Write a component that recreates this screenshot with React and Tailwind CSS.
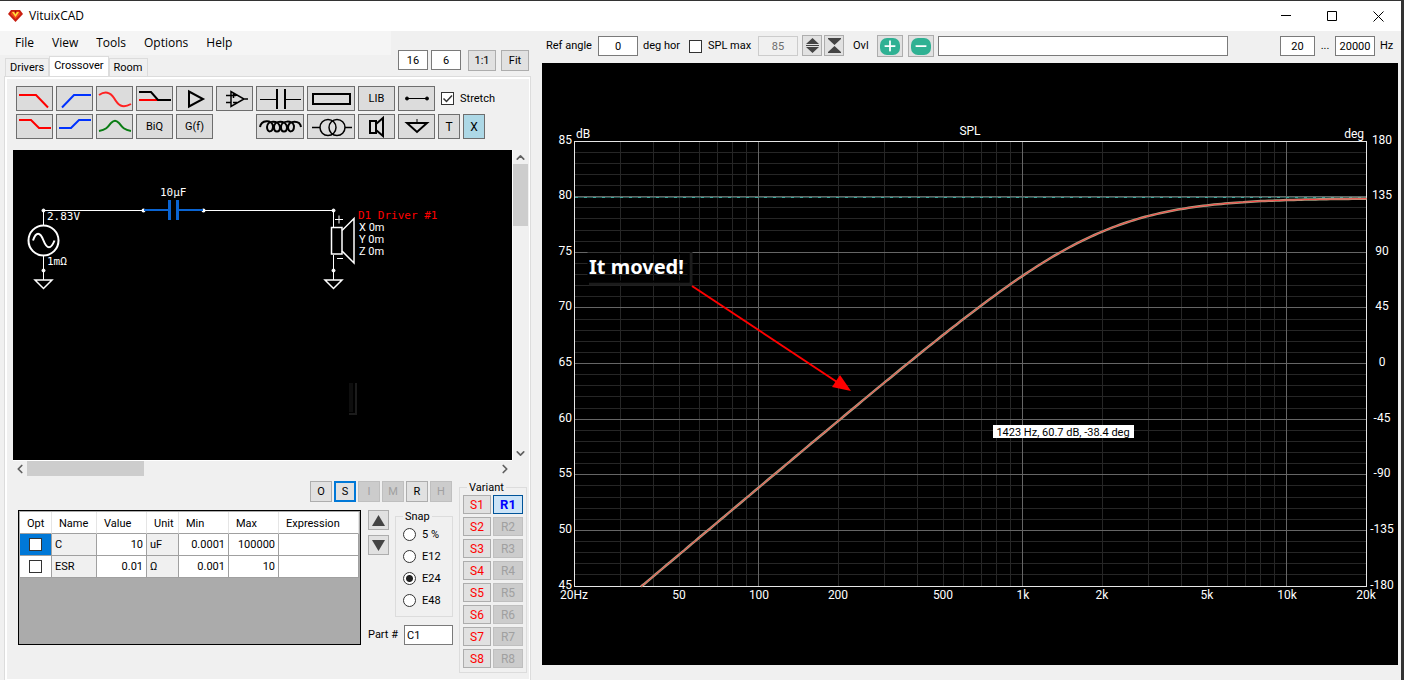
import { useState } from "react";
import { FaPlus, FaMinus } from "react-icons/fa6";
import { FiChevronDown, FiChevronLeft, FiChevronRight, FiChevronUp } from "react-icons/fi";

const menuItems = ["File", "View", "Tools", "Options", "Help"];
const tabs = ["Drivers", "Crossover", "Room"];
const variants = [1, 2, 3, 4, 5, 6, 7, 8];
const snaps = ["5 %", "E12", "E24", "E48"];

const params = [
  { name: "C", value: "10", unit: "uF", min: "0.0001", max: "100000" },
  { name: "ESR", value: "0.01", unit: "Ω", min: "0.001", max: "10" },
];

const modes = [
  { label: "O" },
  { label: "S", active: true },
  { label: "I", disabled: true },
  { label: "M", disabled: true },
  { label: "R" },
  { label: "H", disabled: true },
];

const inputClass = "h-5 border border-[#7a7a7a] bg-white text-center outline-none";
const buttonClass = "flex items-center justify-center border border-[#adadad] bg-[#e1e1e1]";
const checkClass = "block h-[13px] w-[13px] shrink-0 appearance-none border border-[#333] bg-white";

const ToolButton = ({ label, className = "w-[37px] bg-[#dcdcdc]", children }) => (
  <button
    aria-label={label}
    className={`flex h-[25px] shrink-0 items-center justify-center border border-[#6e6e6e] ${className}`}
  >
    {children}
  </button>
);

const Glyph = ({ width = 35, color = "#000", stroke = 2, children }) => (
  <svg width={width} height="23" viewBox={`0 0 ${width} 23`} fill="none" stroke={color} strokeWidth={stroke}>
    {children}
  </svg>
);

const TitleBar = () => (
  <header className="flex h-[30px] items-center justify-between bg-white">
    <div className="flex items-center gap-1.5 pl-2">
      <svg width="15" height="12" viewBox="0 0 15 12">
        <path d="M3 0h9l3 4-7.500 8L0 4z" fill="#c81e10" />
        <path d="M4 1.500h7l1.500 2.500L7.500 9 2.500 4z" fill="#f0481c" />
        <path d="M4 2l3.500 5L11 2 9 2 7.500 4.500 6 2z" fill="#ffe23c" />
        <path d="M6.500 1h2l-1 2.500z" fill="#8c1008" />
      </svg>
      <h1 className="font-['Open_Sans',sans-serif] text-[12px]">VituixCAD</h1>
    </div>
    <div className="flex h-full">
      <button aria-label="Minimize" className="flex w-[46px] items-center justify-center">
        <svg width="10" height="10" stroke="#000"><path d="M0 4.500h10" /></svg>
      </button>
      <button aria-label="Maximize" className="flex w-[46px] items-center justify-center">
        <svg width="10" height="10" stroke="#000" fill="none"><path d="M.5.5h9v9h-9z" /></svg>
      </button>
      <button aria-label="Close" className="flex w-[46px] items-center justify-center">
        <svg width="11" height="11" stroke="#000"><path d="M.5.5l10 10M10.500.5l-10 10" /></svg>
      </button>
    </div>
  </header>
);

const LeftHeader = () => {
  const [activeTab, setActiveTab] = useState("Crossover");

  return (
    <div className="flex h-[45px] items-end justify-between pr-[13px]">
      <div className="flex h-full flex-col justify-between">
        <nav className="flex h-6 w-[391px] items-center bg-[#f5f5f5] pl-1.5 font-['Open_Sans',sans-serif] text-[12px]">
          {menuItems.map((item) => (
            <button key={item} className="px-[9px]">
              {item}
            </button>
          ))}
        </nav>
        <div role="tablist" className="flex items-end pl-[5px]">
          {tabs.map((tab) => (
            <button
              key={tab}
              role="tab"
              aria-selected={tab === activeTab}
              onClick={() => setActiveTab(tab)}
              className={
                tab === activeTab
                  ? "h-5 border border-b-0 border-[#dcdcdc] bg-white px-1 pb-0.5"
                  : "h-[18px] border border-b-0 border-[#dcdcdc] px-1"
              }
            >
              {tab}
            </button>
          ))}
        </div>
      </div>
      <div className="flex gap-[3px] pb-[5px]">
        <input aria-label="Grid columns" defaultValue="16" className={`${inputClass} w-[30px]`} />
        <input aria-label="Grid rows" defaultValue="6" className={`${inputClass} w-[30px]`} />
        <button className={`${buttonClass} ml-1 h-[21px] w-7`}>1:1</button>
        <button className={`${buttonClass} ml-0.5 h-[21px] w-7`}>Fit</button>
      </div>
    </div>
  );
};

const Toolbar = () => (
  <div className="flex flex-col gap-[3px] px-[9px] pt-[7px]">
    <div className="flex items-center gap-[3px]">
      <ToolButton label="Low pass">
        <Glyph color="#f00"><path d="M2 8h17L31 20.500" /></Glyph>
      </ToolButton>
      <ToolButton label="High pass">
        <Glyph color="#0032ff"><path d="M5 20.500L17 8h17" /></Glyph>
      </ToolButton>
      <ToolButton label="Shelf">
        <Glyph color="#f22"><path d="M2 8C8 4 13 5 17 11c4 7 8 11 17 6" /></Glyph>
      </ToolButton>
      <ToolButton label="Low shelf">
        <Glyph>
          <path d="M2 13h19" stroke="#f00" />
          <path d="M2 5h12l7 8h13" />
        </Glyph>
      </ToolButton>
      <ToolButton label="Buffer">
        <Glyph><path d="M12 4.500v15L26 12z" /></Glyph>
      </ToolButton>
      <ToolButton label="Op amp">
        <Glyph stroke={1.5}>
          <path d="M14 4.500v15L27 12zM9 8.500h10M9 15.500h5M27 12h4M16.500 6v5M16 15.500h4" />
        </Glyph>
      </ToolButton>
      <ToolButton label="Capacitor" className="w-12 bg-[#dcdcdc]">
        <Glyph width={46}>
          <path d="M3 12.500h16M28 12.500h16" strokeWidth="1" />
          <path d="M20 2v20M28 2v20" />
        </Glyph>
      </ToolButton>
      <ToolButton label="Resistor" className="w-12 bg-[#dcdcdc]">
        <Glyph width={46}><path d="M5 7h37v10H5z" /></Glyph>
      </ToolButton>
      <ToolButton label="Library">LIB</ToolButton>
      <ToolButton label="Wire">
        <Glyph stroke={1}>
          <path d="M8 11.500h20" />
          <circle cx="8" cy="11.500" r="1.500" fill="#000" />
          <circle cx="28" cy="11.500" r="1.500" fill="#000" />
        </Glyph>
      </ToolButton>
      <label className="flex items-center gap-1.5 pl-[3px]">
        <span className="relative">
          <input type="checkbox" defaultChecked className={`peer ${checkClass}`} />
          <svg
            width="13"
            height="13"
            className="pointer-events-none absolute inset-0 hidden peer-checked:block"
            fill="none"
            stroke="#333"
            strokeWidth="1.500"
          >
            <path d="M2.500 6.500l3 3 5.500-6" />
          </svg>
        </span>
        Stretch
      </label>
    </div>
    <div className="flex items-center gap-[3px]">
      <ToolButton label="Low shelf filter">
        <Glyph color="#f00"><path d="M2 5h12l8 8h12" /></Glyph>
      </ToolButton>
      <ToolButton label="High shelf filter">
        <Glyph color="#0032ff"><path d="M2 13h12l8-8h12" /></Glyph>
      </ToolButton>
      <ToolButton label="Peak">
        <Glyph color="#0a7d14"><path d="M2 16c7-1 9-4 12-8 3-3 5-3 8 0 3 4 5 7 12 8" /></Glyph>
      </ToolButton>
      <ToolButton label="BiQ">BiQ</ToolButton>
      <ToolButton label="G(f)">G(f)</ToolButton>
      <div className="w-[37px]" />
      <ToolButton label="Inductor" className="w-12 bg-[#dcdcdc]">
        <Glyph width={46}>
          <path d="M3 12c1-7 12-8 13-1 0 7-6 7-6 1 0-7 12-7 13 0 0 6-6 6-6 0 0-7 12-7 13 0 0 6-6 6-6 0 0-7 12-7 13-1 0 7-6 7-6 1 1-7 12-7 13 0" />
        </Glyph>
      </ToolButton>
      <ToolButton label="Transformer" className="w-12 bg-[#dcdcdc]">
        <Glyph width={46} stroke={1.5}>
          <path d="M4 12.500h8M37 12.500h7" />
          <circle cx="20" cy="12.500" r="8" />
          <circle cx="29" cy="12.500" r="8" />
        </Glyph>
      </ToolButton>
      <ToolButton label="Driver">
        <Glyph><path d="M11 6h6v12h-6zM17 9l7-6v18l-7-6" /></Glyph>
      </ToolButton>
      <ToolButton label="Ground">
        <Glyph><path d="M8 8h20l-10 9z" /><path d="M18 4v4" strokeWidth="1" /></Glyph>
      </ToolButton>
      <ToolButton label="Text" className="w-[22px] bg-[#dcdcdc] text-[12px]">T</ToolButton>
      <ToolButton label="Delete" className="w-[22px] bg-[#add8e6] text-[12px]">X</ToolButton>
    </div>
  </div>
);

const Ground = ({ x }) => (
  <g>
    <path d={`M${x} 105v25`} strokeWidth="1" />
    <circle cx={x} cy="120.500" r="1.500" fill="#fff" strokeWidth="1" />
    <path d={`M${x - 8.5} 130h17l-8.500 8.500z`} strokeWidth="1.500" />
  </g>
);

const Schematic = () => (
  <svg
    className="h-[310px] w-[499px] shrink-0 bg-black font-['DejaVu_Sans_Mono',monospace] text-[11px]"
    viewBox="0 0 499 310"
    fill="none"
  >
    <g stroke="#fff">
      <path d="M30.500 75V60.500h100M190.500 60.500h130V77" />
      <circle cx="30.500" cy="60.500" r="1.500" fill="#fff" />
      <circle cx="320.500" cy="60.500" r="1.500" fill="#fff" />
      <Ground x={30.5} />
      <Ground x={320.5} />
      <circle cx="30.500" cy="90.500" r="15" strokeWidth="2" fill="#000" />
      <path d="M20 90.500c3-9 7-9 10.500 0s7.500 9 11 0" strokeWidth="2" />
      <path d="M318.500 77.500h10.500v26.500h-10.500z" strokeWidth="1.500" fill="#000" />
      <path d="M329 80.500l12-12v44.500l-12-12" strokeWidth="1.500" />
      <path d="M322 69.500h8M326 65.500v8M324 108.500h6" />
    </g>
    <circle cx="130.500" cy="60.500" r="2" fill="#fff" />
    <circle cx="190.500" cy="60.500" r="2" fill="#fff" />
    {/* selected part */}
    <g stroke="#0a64d2">
      <path d="M131 60h25M165 60h25" strokeWidth="2" />
      <path d="M156.500 50v20M164.500 50v20" strokeWidth="3" />
    </g>
    <g fill="#fff">
      <text x="34" y="70">2.83V</text>
      <text x="34" y="115">1mΩ</text>
      <text x="147" y="46">10µF</text>
      <text x="345" y="69" fill="#f00">D1 Driver #1</text>
      <g className="font-['Roboto',sans-serif]">
        <text x="346" y="81">X 0m</text>
        <text x="346" y="93">Y 0m</text>
        <text x="346" y="105">Z 0m</text>
      </g>
    </g>
    <path d="M343 233v31h-7" stroke="#1c1c1c" strokeWidth="2" />
    <path d="M338 233v29" stroke="#0e0e0e" strokeWidth="4" />
  </svg>
);

const ScrollArea = ({ children }) => (
  <div className="mt-[11px] ml-1.5 grid w-[515px] grid-cols-[499px_16px] text-[#606060]">
    {children}
    <div className="flex flex-col items-center border-l border-white pt-px">
      <FiChevronUp size={13} strokeWidth={3} />
      <div className="h-[62px] w-full bg-[#cdcdcd]" />
      <FiChevronDown size={13} strokeWidth={3} className="mt-auto" />
    </div>
    <div className="flex h-4 items-center border-t border-white">
      <FiChevronLeft size={14} strokeWidth={3} />
      <div className="h-full w-[117px] bg-[#cdcdcd]" />
      <FiChevronRight size={14} strokeWidth={3} className="ml-auto" />
    </div>
  </div>
);

const ParamTable = () => (
  <div className="h-[135px] w-[343px] border border-black bg-[#ababab] p-px">
    <table className="w-full table-fixed border-separate border-spacing-0 bg-white">
      <colgroup>
        <col className="w-8" />
        <col className="w-[45px]" />
        <col className="w-[50px]" />
        <col className="w-8" />
        <col className="w-[50px]" />
        <col className="w-[50px]" />
        <col />
      </colgroup>
      <thead>
        <tr className="h-[22px] text-left [&>th]:border-r [&>th]:border-b [&>th]:border-r-[#e5e5e5] [&>th]:border-b-[#a0a0a0] [&>th]:p-0 [&>th]:pt-0.5 [&>th]:pl-[7px] [&>th]:font-normal">
          <th>Opt</th>
          <th>Name</th>
          <th>Value</th>
          <th>Unit</th>
          <th>Min</th>
          <th>Max</th>
          <th>Expression</th>
        </tr>
      </thead>
      <tbody>
        {params.map((param, index) => (
          <tr
            key={param.name}
            className="h-[22px] [&>td]:border-r [&>td]:border-b [&>td]:border-[#a0a0a0] [&>td]:px-[3px] [&>td]:py-0"
          >
            <td className={index === 0 ? "bg-[#0078d7]" : ""}>
              <input type="checkbox" aria-label={`Optimize ${param.name}`} className={`mx-auto ${checkClass}`} />
            </td>
            <td className="bg-[#f0f0f0]">{param.name}</td>
            <td className="text-right">{param.value}</td>
            <td className="bg-[#f0f0f0]">{param.unit}</td>
            <td className="text-right">{param.min}</td>
            <td className="text-right">{param.max}</td>
            <td />
          </tr>
        ))}
      </tbody>
    </table>
  </div>
);

const PartPanel = () => {
  const [snap, setSnap] = useState("E24");

  return (
    <div className="flex justify-between pt-[5px] pr-0.5 pl-[11px]">
      <div className="flex flex-col gap-2">
        <div className="flex justify-end gap-0.5 pr-px">
          {modes.map((mode) => (
            <button
              key={mode.label}
              disabled={mode.disabled}
              className={
                mode.disabled
                  ? "h-[21px] w-[22px] border border-[#bfbfbf] bg-[#ccc] text-[#a0a0a0]"
                  : mode.active
                    ? "h-[21px] w-[22px] border-2 border-[#0078d7] bg-[#e1e1e1]"
                    : "h-[21px] w-[22px] border border-[#adadad] bg-[#e1e1e1]"
              }
            >
              {mode.label}
            </button>
          ))}
        </div>
        <div className="flex gap-[7px]">
          <ParamTable />
          <div className="flex flex-col justify-between">
            <div className="flex gap-1.5">
              <div className="flex flex-col gap-[5px]">
                <button aria-label="Move up" className={`${buttonClass} h-5 w-[21px]`}>
                  <svg width="13" height="11" fill="#444"><path d="M6.500 0L13 11H0z" /></svg>
                </button>
                <button aria-label="Move down" className={`${buttonClass} h-5 w-[21px]`}>
                  <svg width="13" height="11" fill="#444"><path d="M0 0h13L6.500 11z" /></svg>
                </button>
              </div>
              <fieldset className="h-[107px] w-[58px] border border-[#dcdcdc] pl-[7px]">
                <legend className="px-0.5 leading-[13px]">Snap</legend>
                <div className="flex flex-col gap-[9px] pt-[5px]">
                  {snaps.map((item) => (
                    <label key={item} className="flex h-[13px] items-center gap-1.5">
                      <input
                        type="radio"
                        name="snap"
                        checked={snap === item}
                        onChange={() => setSnap(item)}
                        className="h-[13px] w-[13px] shrink-0 appearance-none rounded-full border border-[#333] bg-white checked:bg-[radial-gradient(#222_0_3px,#fff_4px)]"
                      />
                      {item}
                    </label>
                  ))}
                </div>
              </fieldset>
            </div>
            <label className="flex items-center justify-between">
              Part #
              <input
                defaultValue="C1"
                className="h-5 w-[49px] border border-[#7a7a7a] bg-white px-0.5 outline-none"
              />
            </label>
          </div>
        </div>
      </div>
      <fieldset className="w-[68px] border border-[#dcdcdc] px-[3px] pb-1">
        <legend className="ml-1 px-0.5 leading-[13px]">Variant</legend>
        <div className="flex flex-col gap-[3px] pt-px">
          {variants.map((n) => (
            <div key={n} className="flex gap-0.5">
              <button className={`${buttonClass} h-[19px] w-7 text-[12px] text-[#f00]`}>S{n}</button>
              {n === 1 ? (
                <button className="h-[19px] w-[30px] border border-[#005499] bg-[#cce4f7] text-[13px] font-bold text-[#00f]">
                  R1
                </button>
              ) : (
                <button
                  disabled
                  className="h-[19px] w-[30px] border border-[#bfbfbf] bg-[#ccc] text-[12px] text-[#a0a0a0]"
                >
                  R{n}
                </button>
              )}
            </div>
          ))}
        </div>
      </fieldset>
    </div>
  );
};

const ChartControls = () => (
  <div className="mb-0.5 flex h-[30px] items-center pr-px pl-1 whitespace-nowrap">
    <label className="flex items-center gap-1.5">
      <span className="w-[46px]">Ref angle</span>
      <input defaultValue="0" className={`${inputClass} w-10`} />
    </label>
    <span className="ml-[5px] w-[46px]">deg hor</span>
    <label className="flex w-[69px] items-center gap-1.5">
      <input type="checkbox" className={checkClass} />
      SPL max
    </label>
    <input
      aria-label="SPL max value"
      disabled
      defaultValue="85"
      className="h-5 w-10 border border-[#ccc] bg-[#f0f0f0] text-center text-[#6d6d6d]"
    />
    <div className="flex gap-0.5 pb-0.5 pl-1">
      <button aria-label="Expand scale" className={`${buttonClass} h-[21px] w-5`}>
        <svg width="13" height="15" fill="#444">
          <path d="M6.500 0L13 6H0zM0 7h13v1H0zM0 9h13l-6.500 6z" />
        </svg>
      </button>
      <button aria-label="Compress scale" className={`${buttonClass} h-[21px] w-5`}>
        <svg width="13" height="15" fill="#444">
          <path d="M0 0h13v1L6.500 7 0 1zM6.500 8l6.500 6v1H0v-1z" />
        </svg>
      </button>
    </div>
    <span className="ml-[9px] w-6">Ovl</span>
    <div className="flex gap-[5px]">
      <button aria-label="Add overlay" className={`${buttonClass} h-[22px] w-[26px]`}>
        <span className="flex h-[17px] w-5 items-center justify-center rounded-[7px] bg-[#2fb193] text-white">
          <FaPlus size={14} />
        </span>
      </button>
      <button aria-label="Remove overlay" className={`${buttonClass} h-[22px] w-[26px]`}>
        <span className="flex h-[17px] w-5 items-center justify-center rounded-[7px] bg-[#2fb193] text-white">
          <FaMinus size={14} />
        </span>
      </button>
    </div>
    <input aria-label="Overlay name" className={`${inputClass} mr-[52px] ml-1 min-w-0 flex-1`} />
    <input aria-label="Minimum frequency" defaultValue="20" className={`${inputClass} w-[35px]`} />
    <span className="w-5 text-center">...</span>
    <label className="flex items-center gap-[5px]">
      <input defaultValue="20000" className={`${inputClass} w-10`} />
      <span className="w-[17px]">Hz</span>
    </label>
  </div>
);

// plot area inside the chart
const LEFT = 32.5;
const TOP = 78.5;
const WIDTH = 792;
const HEIGHT = 445;

const freqToX = (f) => LEFT + (Math.log10(f / 20) / 3) * WIDTH;
const splToY = (spl) => TOP + ((85 - spl) / 40) * HEIGHT;
const crisp = (v) => Math.floor(v - 0.5) + 0.5;

const freqLines = [10, 100, 1000, 10000]
  .flatMap((decade) => [1, 2, 3, 4, 5, 6, 7, 8, 9].map((n) => n * decade))
  .filter((f) => f > 20 && f < 20000);

const splLines = Array.from({ length: 39 }, (_, i) => 46 + i);
const splLabels = [85, 80, 75, 70, 65, 60, 55, 50, 45];

const freqLabels = [
  [20, "20Hz"],
  [50, "50"],
  [100, "100"],
  [200, "200"],
  [500, "500"],
  [1000, "1k"],
  [2000, "2k"],
  [5000, "5k"],
  [10000, "10k"],
  [20000, "20k"],
];

// first order high pass, 10 uF into 8 ohm
const response = Array.from({ length: 201 }, (_, i) => {
  const f = 35.7 * Math.pow(20000 / 35.7, i / 200);
  const spl = 79.9 - 10 * Math.log10(1 + Math.pow(1989 / f, 2));
  return `${freqToX(f).toFixed(1)},${splToY(Math.max(spl, 45)).toFixed(1)}`;
}).join(" ");

const Chart = () => (
  <svg className="h-auto w-full bg-black font-['Roboto',sans-serif] text-[12px]" viewBox="0 0 856 602" fill="none">
    {splLines.filter((spl) => spl % 5).map((spl) => (
      <path key={spl} d={`M${LEFT} ${crisp(splToY(spl))}h${WIDTH}`} stroke="#262626" />
    ))}
    {freqLines.map((f) => (
      <path key={f} d={`M${crisp(freqToX(f))} ${TOP}v${HEIGHT}`} stroke="#262626" />
    ))}
    {splLines.filter((spl) => spl % 5 === 0).map((spl) => (
      <path key={spl} d={`M${LEFT} ${crisp(splToY(spl))}h${WIDTH}`} stroke="#666" />
    ))}
    {[100, 1000, 10000].map((f) => (
      <path key={f} d={`M${crisp(freqToX(f))} ${TOP}v${HEIGHT}`} stroke="#666" />
    ))}
    <path d={`M${LEFT} 134.500h${WIDTH}`} stroke="#3fa79c" strokeDasharray="4 1 1 1 1 1" />
    <rect x={LEFT} y={TOP} width={WIDTH} height={HEIGHT} stroke="#e6e6e6" />
    <polyline points={response} stroke="#a9a283" strokeWidth="2.500" />
    <polyline points={response} stroke="#ff4646" strokeWidth="1" />

    <g fill="#fff">
      {splLabels.map((spl) => (
        <text key={spl} x="30" y={Math.floor(splToY(spl) - 0.5) + 3} textAnchor="end">
          {spl}
        </text>
      ))}
      {splLabels.map((spl) => (
        <text key={spl} x="840" y={Math.floor(splToY(spl) - 0.5) + 3} textAnchor="middle">
          {(spl - 65) * 9}
        </text>
      ))}
      {freqLabels.map(([f, label]) => (
        <text key={f} x={Math.floor(freqToX(f))} y="536" textAnchor="middle">
          {label}
        </text>
      ))}
      <text x="34" y="75">dB</text>
      <text x="822" y="75" textAnchor="end">deg</text>
      <text x="428" y="72" textAnchor="middle">SPL</text>
    </g>

    {/* cursor readout */}
    <rect x="451" y="362" width="141" height="13" fill="#fff" />
    <text x="521" y="373" fill="#000" textAnchor="middle" className="text-[11px]">
      1423 Hz, 60.7 dB, -38.4 deg
    </text>

    {/* annotation */}
    <path d="M47 221h102v-32" stroke="#1c1c1c" strokeWidth="3" />
    <rect x="46.500" y="190.500" width="100" height="28" stroke="#000" strokeWidth="2" />
    <text x="47" y="211" fill="#fff" className="font-['Noto_Sans',sans-serif] text-[20px] font-bold">
      It moved!
    </text>
    <path d="M150 223L295 319" stroke="#f00" strokeWidth="2" />
    <path d="M309 328l-11-16-8 12z" fill="#f00" />
  </svg>
);

const App = () => (
  <div className="flex min-h-screen flex-col border-t border-r-[3px] border-[#333] bg-[#f0f0f0] font-['Roboto',sans-serif] text-[11px] leading-4 text-black">
    <TitleBar />
    <main className="flex flex-1">
      <section className="flex w-[542px] shrink-0 flex-col">
        <LeftHeader />
        <div className="mr-[11px] ml-1 flex-1 border-x border-t border-[#dcdcdc]">
          <div className="h-full border-2 border-r border-b border-white">
            <Toolbar />
            <ScrollArea>
              <Schematic />
            </ScrollArea>
            <PartPanel />
          </div>
        </div>
      </section>
      <section className="min-w-0 flex-1 pr-[3px]">
        <ChartControls />
        <Chart />
      </section>
    </main>
  </div>
);

export default App;
